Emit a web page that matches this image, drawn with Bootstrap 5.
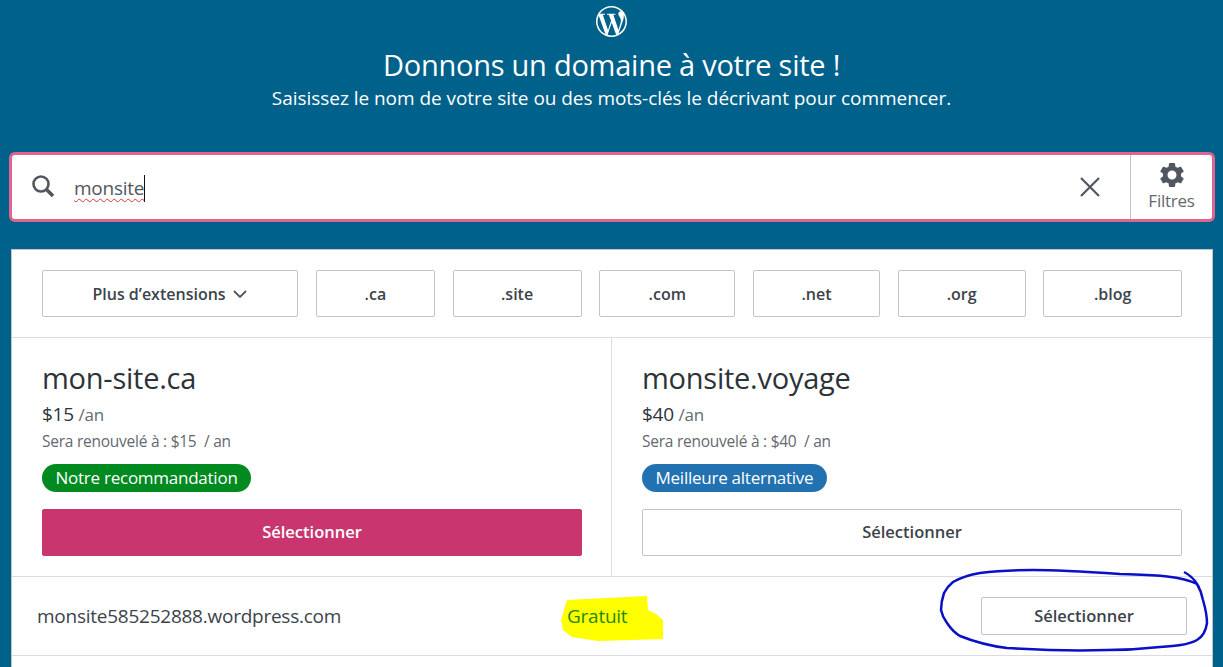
<!DOCTYPE html>
<html lang="fr">
<head>
    <meta charset="UTF-8">
    <meta name="viewport" content="width=device-width, initial-scale=1.0">
    <title>Donnons un domaine à votre site</title>
    <link href="https://cdn.jsdelivr.net/npm/bootstrap@5.3.0/dist/css/bootstrap.min.css" rel="stylesheet">
    <style>
        html, body {
            height: 100%;
            overflow: hidden;
        }
        body {
            background: #00618a;
            color: #2c3338;
            font-family: "Open Sans", "Noto Sans", sans-serif;
            letter-spacing: -0.25px;
            position: relative;
        }
        .wp-logo {
            display: block;
            width: 31px;
            height: 31px;
            margin: 0 auto;
            fill: #fff;
        }
        .top-head {
            padding-top: 6px;
            height: 152px;
        }
        .top-title {
            font-size: 29px;
            font-weight: 400;
            line-height: 36px;
            margin: 10px 0 0;
        }
        .top-sub {
            font-size: 19px;
            line-height: 24px;
            letter-spacing: -0.04px;
            margin: 3px 0 0;
        }
        .search-box {
            height: 70px;
            margin: 0 8px 0 9px;
            border: 3px solid #e0648f;
            border-radius: 6px;
        }
        .search-ico {
            width: 26px;
            height: 26px;
            margin-left: 18px;
            margin-top: -3px;
        }
        .search-val {
            font-size: 19px;
            line-height: 27px;
            margin-left: 18px;
            margin-top: 2px;
            color: #50575e;
            border-right: 1px solid #111;
            text-decoration: underline wavy #d63638 1px;
            text-underline-offset: 3px;
        }
        .clear-ico {
            width: 22px;
            height: 22px;
            margin-right: 29px;
        }
        .filter-box {
            width: 82px;
            color: #646970;
            font-size: 17px;
            line-height: 20px;
            border-left: 1px solid #c3c4c7;
        }
        .gear-ico {
            width: 30px;
            height: 30px;
            fill: #50575e;
            margin-top: 5px;
            margin-bottom: 1px;
        }
        .result-card {
            height: 500px;
            margin: 27px 10px 0 11px;
            background: #fff;
            border-radius: 0;
            border: 1px solid #c3c4c7;
            border-bottom: 0;
        }
        .ext-bar {
            gap: 17.7px;
            padding: 20px 30px 20px 30px;
            border-bottom: 1px solid #dcdcde;
        }
        .ext-btn {
            height: 47px;
            font-size: 16px;
            font-weight: 600;
            color: #3c434a;
            background: #fff;
            border: 1px solid #c3c4c7;
            border-radius: 2px;
            padding: 0;
        }
        .ext-more { width: 256.2px; flex: none; }
        .ext-ca { width: 119px; flex: none; }
        .ext-site { width: 129px; flex: none; }
        .ext-com { width: 136px; flex: none; }
        .ext-net { width: 127px; flex: none; }
        .ext-org { width: 128px; flex: none; }
        .ext-blog { width: 138.6px; flex: none; }
        .chev-ico {
            width: 16px;
            height: 16px;
            margin-left: 2px;
            vertical-align: -2px;
        }
        .offer-cell {
            height: 239px;
            padding: 21px 30px 0;
            border-bottom: 1px solid #dcdcde;
        }
        .offer-left {
            padding-right: 29px;
            border-right: 1px solid #dcdcde;
        }
        .offer-name {
            font-size: 29px;
            font-weight: 400;
            line-height: 38px;
            margin: 0;
        }
        .offer-price {
            font-size: 19px;
            line-height: 24px;
            margin-top: 5px;
        }
        .offer-price span {
            font-size: 17px;
            color: #646970;
        }
        .offer-renew {
            font-size: 15.5px;
            line-height: 18px;
            color: #646970;
            margin-top: 5px;
        }
        .offer-tag {
            display: inline-block;
            font-size: 17px;
            line-height: 28px;
            color: #fff;
            padding: 0 13.5px;
            border-radius: 14px;
            margin-top: 14px;
        }
        .tag-green { background: #008a20; }
        .tag-blue { background: #2271b1; }
        .pick-btn {
            display: block;
            width: 100%;
            height: 47px;
            margin-top: 17px;
            font-size: 16.5px;
            font-weight: 600;
            color: #3c434a;
            background: #fff;
            border: 1px solid #c3c4c7;
            border-radius: 2px;
        }
        .pick-main {
            color: #fff;
            background: #c9356e;
            border-color: #c9356e;
        }
        .free-row {
            height: 79px;
            padding: 0 25px 0 25px;
            border-bottom: 1px solid #dcdcde;
            font-size: 19px;
        }
        .free-name {
            width: 530px;
            color: #3c434a;
        }
        .free-tag {
            color: #1f8a12;
            position: relative;
            z-index: 1;
        }
        .pick-small {
            width: 206px;
            height: 38px;
            margin: 0 0 0 auto;
            position: relative;
            z-index: 1;
        }
        .ink-layer {
            position: absolute;
            left: 0;
            top: 0;
            width: 1223px;
            height: 667px;
            pointer-events: none;
        }
    </style>
</head>
<body>
    <!-- Header -->
    <div class="top-head text-center text-white">
        <svg class="wp-logo" viewBox="0 0 24 24"><path d="M21.469 6.825c.84 1.537 1.318 3.3 1.318 5.175 0 3.979-2.156 7.456-5.363 9.325l3.295-9.527c.615-1.54.82-2.771.82-3.864 0-.405-.026-.78-.07-1.11m-7.981.105c.647-.03 1.232-.105 1.232-.105.582-.075.514-.93-.067-.899 0 0-1.755.135-2.88.135-1.064 0-2.85-.15-2.85-.15-.585-.03-.661.855-.075.885 0 0 .54.061 1.125.09l1.68 4.605-2.37 7.08L5.354 6.9c.649-.03 1.234-.1 1.234-.1.585-.075.516-.93-.065-.896 0 0-1.746.138-2.874.138-.2 0-.438-.008-.69-.015C4.911 3.15 8.235 1.215 12 1.215c2.809 0 5.365 1.072 7.286 2.833-.046-.003-.091-.009-.141-.009-1.06 0-1.812.923-1.812 1.914 0 .89.513 1.643 1.06 2.531.411.72.89 1.643.89 2.977 0 .915-.354 1.994-.821 3.479l-1.075 3.585-3.9-11.61.001.014zM12 22.784c-1.059 0-2.081-.153-3.048-.437l3.237-9.406 3.315 9.087c.024.053.05.101.078.149-1.12.393-2.325.609-3.582.609M1.211 12c0-1.564.336-3.05.935-4.39L7.29 21.709C3.694 19.96 1.212 16.271 1.211 12M12 0C5.385 0 0 5.385 0 12s5.385 12 12 12 12-5.385 12-12S18.615 0 12 0"/></svg>
        <h1 class="top-title">Donnons un domaine à votre site !</h1>
        <p class="top-sub">Saisissez le nom de votre site ou des mots-clés le décrivant pour commencer.</p>
    </div>

    <!-- Search -->
    <div class="search-box d-flex align-items-center bg-white">
        <svg class="search-ico" viewBox="0 0 26 26" fill="none" stroke="#50575e"><circle cx="11" cy="11" r="7.5" stroke-width="2.6"/><path d="M16.5 16.5 23 23" stroke-width="3.6"/></svg>
        <span class="search-val">monsite</span>
        <svg class="clear-ico ms-auto" viewBox="0 0 22 22" fill="none" stroke="#50575e" stroke-width="2.2"><path d="M2 2 20 20M20 2 2 20"/></svg>
        <div class="filter-box h-100 d-flex flex-column align-items-center">
            <svg class="gear-ico" viewBox="0 0 24 24"><path d="M19.14 12.94c.04-.3.06-.61.06-.94 0-.32-.02-.64-.07-.94l2.03-1.58a.49.49 0 0 0 .12-.61l-1.92-3.32a.49.49 0 0 0-.59-.22l-2.39.96c-.5-.38-1.03-.7-1.62-.94l-.36-2.54a.48.48 0 0 0-.48-.41h-3.84a.48.48 0 0 0-.47.41l-.36 2.54c-.59.24-1.13.57-1.62.94l-2.39-.96a.48.48 0 0 0-.59.22L2.74 8.87a.47.47 0 0 0 .12.61l2.03 1.58c-.05.3-.09.63-.09.94s.02.64.07.94l-2.03 1.58a.49.49 0 0 0-.12.61l1.92 3.32c.12.22.37.29.59.22l2.39-.96c.5.38 1.03.7 1.62.94l.36 2.54c.05.24.24.41.48.41h3.84c.24 0 .44-.17.47-.41l.36-2.54c.59-.24 1.13-.56 1.62-.94l2.39.96c.22.08.47 0 .59-.22l1.92-3.32a.47.47 0 0 0-.12-.61l-2.01-1.58zM12 15.6A3.6 3.6 0 1 1 12 8.4a3.6 3.6 0 0 1 0 7.2z"/></svg>
            <span>Filtres</span>
        </div>
    </div>

    <!-- Results -->
    <div class="result-card">
        <div class="ext-bar d-flex">
            <button class="ext-btn ext-more">Plus d’extensions <svg class="chev-ico" viewBox="0 0 16 16" fill="none" stroke="#50575e" stroke-width="1.8"><path d="M2 5 8 11 14 5"/></svg></button>
            <button class="ext-btn ext-ca">.ca</button>
            <button class="ext-btn ext-site">.site</button>
            <button class="ext-btn ext-com">.com</button>
            <button class="ext-btn ext-net">.net</button>
            <button class="ext-btn ext-org">.org</button>
            <button class="ext-btn ext-blog">.blog</button>
        </div>
        <div class="row g-0">
            <div class="col-6 offer-cell offer-left">
                <h2 class="offer-name">mon-site.ca</h2>
                <div class="offer-price">$15 <span>/an</span></div>
                <div class="offer-renew">Sera renouvelé à : $15 &nbsp;/ an</div>
                <div class="offer-tag tag-green">Notre recommandation</div>
                <button class="pick-btn pick-main">Sélectionner</button>
            </div>
            <div class="col-6 offer-cell">
                <h2 class="offer-name">monsite.voyage</h2>
                <div class="offer-price">$40 <span>/an</span></div>
                <div class="offer-renew">Sera renouvelé à : $40 &nbsp;/ an</div>
                <div class="offer-tag tag-blue">Meilleure alternative</div>
                <button class="pick-btn">Sélectionner</button>
            </div>
        </div>
        <div class="free-row d-flex align-items-center">
            <div class="free-name">monsite585252888.wordpress.com</div>
            <div class="free-tag">Gratuit</div>
            <button class="pick-btn pick-small">Sélectionner</button>
        </div>
    </div>

    <!-- Hand drawn marks on the screenshot -->
    <svg class="ink-layer" viewBox="0 0 1223 667" fill="none">
        <path d="M567 600 L647 596 L648 610 L656 614 L663 620 L663 639 L598 641 L572 637 L563 630 L561 620 Z" fill="#ffff00"/>
        <path d="M1184 572 C1190 575 1194 579 1197 584 C1180 575 1150 575 1120 574 C1090 572 1060 570 1033 570 C1012 570 995 571 980 573 C968 575 960 578 953 582 C948 586 946 589 944 593 C942 599 941 604 941 610 C942 615 944 619 947 623 C951 629 955 633 960 636 C975 642 990 646 1007 648 C1040 650 1075 651 1107 650 C1125 650 1142 649 1160 647 C1175 646 1188 645 1197 640 C1204 636 1206 630 1207 623 C1207 615 1205 607 1203 600 C1202 594 1200 589 1197 584" stroke="#0a10c8" stroke-width="2.5"/>
    </svg>
</body>
</html>
